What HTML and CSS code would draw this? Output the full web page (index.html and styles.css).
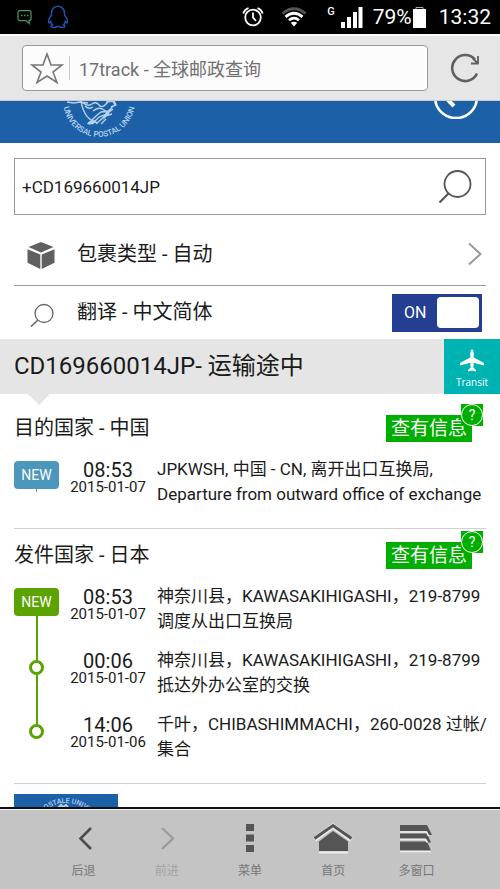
FILE: index.html
```html
<!DOCTYPE html>
<html lang="zh-CN">
<head>
<meta charset="utf-8">
<meta name="viewport" content="width=device-width, initial-scale=1">
<title>17track - 全球邮政查询</title>
<link rel="stylesheet" href="styles.css">
</head>
<body>
<div class="status">
  <svg class="status-chat" width="16" height="18" viewBox="0 0 16 18" fill="none" stroke="#4f9a5c" stroke-width="1.2"><path d="M3 2.600h9q2 0 2 2v6q0 2-2 2l.2 3-3.200-3H3q-2 0-2-2v-6q0-2 2-2z"/><path d="M4 7.500h1.500M7 7.500h1.500M10 7.500h1.500" stroke-width="1.500"/></svg>
  <svg class="status-qq" width="22" height="24" viewBox="0 0 22 24" fill="none" stroke="#2453ae" stroke-width="1.500"><path d="M4.500 10C4 4.500 7 1.200 11 1.200S18 4.500 17.500 10c2 2.500 3.500 5.500 2.800 7.500-.5.800-1.300 0-2-1-.3 1.500-.8 2.400-1.800 3.500 2.500 1.200 1.200 2.600-1 2.600-1.800 0-2.800-.5-3.500-1.200h-2c-.7.700-1.700 1.200-3.500 1.200-2.200 0-3.500-1.400-1-2.600-1-1.100-1.500-2-1.800-3.500-.7 1-1.500 1.800-2 1C1 15.500 2.500 12.500 4.500 10z"/></svg>
  <div class="status-right">
    <svg width="24" height="22" viewBox="0 0 24 22" fill="none" stroke="#fff" stroke-width="1.800"><circle cx="12" cy="11.500" r="7.800"/><path d="M12 6.500v5l3 3.500M2.300 7.500Q3.500 3.500 7.500 2M21.700 7.500Q20.500 3.500 16.500 2"/></svg>
    <svg class="status-wifi" width="26" height="20" viewBox="0 0 26 20" fill="none" stroke="#fff" stroke-width="2.800"><path d="M1.500 6.500Q13-3 24.500 6.500" stroke="#555"/><path d="M4.500 9.800Q13 2.800 21.500 9.800M8 13.200Q13 9 18 13.200"/><path d="M9.800 15.800Q13 13.500 16.200 15.800L13 19.500z" fill="#fff" stroke="none"/></svg>
    <span class="status-net">G</span>
    <svg width="22" height="22" viewBox="0 0 22 22" fill="#fff"><path d="M0 16h4v6H0zM6 11h4v11H6zM12 6h4v16h-4zM17.500 1h4v21h-4z"/></svg>
    <span class="status-percent">79%</span>
    <svg width="15" height="22" viewBox="0 0 15 22"><path d="M4 4V1.500h7V4" fill="none" stroke="#aaa"/><path d="M1 3h13v19H1z" fill="#fff"/></svg>
    <span class="status-time">13:32</span>
  </div>
</div>

<header class="browser">
  <div class="address">
    <button class="plain" type="button" aria-label="收藏"><svg width="34" height="32" viewBox="0 0 34 32" fill="none" stroke="#777" stroke-width="1.600"><path d="M17 2l4 11h11l-9 7 4 10.500-10-6.500-10 6.500 4-10.500-9-7h11z"/></svg></button>
    <input class="address-input" type="text" aria-label="网址" value="17track - 全球邮政查询">
  </div>
  <button class="plain reload" type="button" aria-label="刷新"><svg width="30" height="30" viewBox="0 0 30 30" fill="none" stroke="#606060" stroke-width="2.600"><path d="M27 20.500A13 13 0 1 1 25 6.500"/><path d="M28 3v7.500h-7M28 10.500l-5.500-5.500" stroke-width="1.800"/></svg></button>
</header>

<main class="page">
  <div class="banner">
    <svg class="banner-logo" width="80" height="42" viewBox="0 0 80 42">
      <path id="seal-bottom" d="M4 0A36 36 0 0 0 76 0" fill="none"/>
      <text class="seal-text"><textPath href="#seal-bottom" startOffset="50%" text-anchor="middle">UNIVERSAL POSTAL UNION</textPath></text>
      <g fill="none" stroke="#b5d2ec" stroke-width="1.400"><path d="M22 0Q25 19 39 22M8 1l7 1 6-1 8 1M24 2q5 4 9 1t7 1 8-2 8 2M26 5q4 4 8 1M30 22l7-7 5-4 8-1 4-5M33 23l7-7 8-3M37 23l9-8 7-2M42 23l5-5M34 10q6-5 11-1 4 4 9-1M47 1l8-1 2 4-5 2"/><path d="M35 19q-5 0-7 4 6 2 9-3zM47 11l-3 8 6-6 2-6z" fill="#b5d2ec" stroke="none"/></g>
    </svg>
    <a class="banner-back" href="#top" aria-label="返回"><svg width="44" height="18" viewBox="0 0 44 18" fill="none" stroke="#fff"><path d="M1.200-3a20.800 20 0 0 0 41.600 0" stroke-width="2.600"/><path d="M13-2l7 7" stroke-width="4"/></svg></a>
  </div>

  <form class="query">
    <div class="search">
      <input class="search-input" type="text" aria-label="运单号" value="+CD169660014JP">
      <button class="plain" type="submit" aria-label="查询"><svg width="34" height="34" viewBox="0 0 34 34" fill="none" stroke="#555" stroke-width="1.800"><circle cx="19.500" cy="14" r="13"/><path d="M10.500 23.500l-9 9" stroke-width="2.200"/></svg></button>
    </div>
    <button class="option option-type" type="button">
      <svg class="option-icon" width="28" height="28" viewBox="0 0 28 28" fill="#606060"><path d="M14 0l12.500 5L14 10.500 1.500 5zM.5 7.200l12.800 5.300V27L.5 20.800zM27.500 7.200l-12.800 5.300V27l12.800-6.200z"/></svg>
      <span class="option-label">包裹类型 - 自动</span>
      <svg width="14" height="24" viewBox="0 0 14 24" fill="none" stroke="#999" stroke-width="2"><path d="M1 1.500L12.500 12 1 22.500"/></svg>
    </button>
    <div class="option option-translate">
      <svg class="option-icon" width="28" height="24" viewBox="0 0 28 24" fill="none" stroke="#666" stroke-width="1.300"><circle cx="17" cy="10.500" r="9"/><path d="M11 17l-7 6.500" stroke-width="1.600"/></svg>
      <label class="option-label" for="translate">翻译 - 中文简体</label>
      <label class="toggle"><input class="toggle-input" id="translate" type="checkbox" checked><span>ON</span><span class="toggle-knob"></span></label>
    </div>
  </form>

  <div class="parcel">
    <h1 class="parcel-title">CD169660014JP- 运输途中</h1>
    <div class="parcel-state">
      <svg width="24" height="23" viewBox="0 0 24 23" fill="#fff"><path d="M12 0q1.700 1 1.700 4v4.500L24 14v2.500l-10.300-2.700-.3 5L16 21v1.500l-4-1-4 1V21l2.600-2.200-.3-5L0 16.500V14l10.300-5.500V4q0-3 1.700-4z"/></svg>
      <span>Transit</span>
    </div>
  </div>

  <section class="leg leg-destination">
    <div class="leg-head">
      <h2 class="leg-title">目的国家 - 中国</h2>
      <a class="info" href="#destination">查有信息<span class="info-badge"><span class="info-mark">?</span></span></a>
    </div>
    <ol class="events">
      <li class="event">
        <div class="marker"><span class="new">NEW</span><span class="stub"></span></div>
        <div class="when"><span class="time">08:53</span><span class="date">2015-01-07</span></div>
        <p class="what">JPKWSH, 中国 - CN, 离开出口互换局, Departure from outward office of exchange</p>
      </li>
    </ol>
  </section>

  <section class="leg leg-origin">
    <div class="leg-head">
      <h2 class="leg-title">发件国家 - 日本</h2>
      <a class="info" href="#origin">查有信息<span class="info-badge"><span class="info-mark">?</span></span></a>
    </div>
    <ol class="events">
      <li class="event">
        <div class="marker"><span class="new">NEW</span><span class="line"></span></div>
        <div class="when"><span class="time">08:53</span><span class="date">2015-01-07</span></div>
        <p class="what">神奈川县，KAWASAKIHIGASHI，219-8799 调度从出口互换局</p>
      </li>
      <li class="event">
        <div class="marker"><span class="lead"></span><span class="dot"></span><span class="line"></span></div>
        <div class="when"><span class="time">00:06</span><span class="date">2015-01-07</span></div>
        <p class="what">神奈川县，KAWASAKIHIGASHI，219-8799 抵达外办公室的交换</p>
      </li>
      <li class="event">
        <div class="marker"><span class="lead"></span><span class="dot"></span></div>
        <div class="when"><span class="time">14:06</span><span class="date">2015-01-06</span></div>
        <p class="what">千叶，CHIBASHIMMACHI，260-0028 过帐/集合</p>
      </li>
    </ol>
  </section>

  <div class="partner">
    <svg width="104" height="80" viewBox="0 0 104 80">
      <path id="seal-top" d="M19 42A33 33 0 0 1 85 42" fill="none"/>
      <text class="seal-text seal-small"><textPath href="#seal-top" startOffset="50%" text-anchor="middle">UNION POSTALE UNIVERSELLE</textPath></text>
      <path d="M44 14l3-3 2 2 3-2 2 2" fill="none" stroke="#b5d2ec" stroke-width="2"/>
    </svg>
  </div>
</main>

<nav class="toolbar">
  <button class="tool" type="button"><svg width="34" height="32" viewBox="0 0 34 32" fill="none" stroke="#4c4c4c" stroke-width="2.600"><path d="M24 6L13.500 16.500 24 27"/></svg><span>后退</span></button>
  <button class="tool" type="button" disabled><svg width="34" height="32" viewBox="0 0 34 32" fill="none" stroke="#9b9b9b" stroke-width="2.400"><path d="M12 6l11 10.500L12 27"/></svg><span>前进</span></button>
  <button class="tool" type="button"><svg width="34" height="32" viewBox="0 0 34 32" fill="#555"><path d="M13 2h8v7h-8zM13 12.500h8v7h-8zM13 23h8v7h-8z"/></svg><span>菜单</span></button>
  <button class="tool" type="button"><svg width="40" height="32" viewBox="0 0 40 32" fill="#555"><path d="M6 30.500h29" stroke="#eee" stroke-width="2"/><path d="M20 9L6 19.500V29h29V19.500z"/><path d="M1.500 17.500L20 4l18.500 13.500" fill="none" stroke="#eee" stroke-width="5"/><path d="M1.500 16.500L20 3.500l18.500 13" fill="none" stroke="#555" stroke-width="3"/></svg><span>首页</span></button>
  <button class="tool" type="button"><svg width="34" height="32" viewBox="0 0 34 32" fill="#555"><path d="M1 3h27l5 10h-3l-2.500-4H1z"/><path d="M1 11.500h27l4 9h-3l-2.500-4H1z"/><path d="M1 19.500h27L32 28.500H1z"/><path d="M1 10h26.500l2 4M1 17.500h25.500l2 3M1 29.500h31" fill="none" stroke="#eee" stroke-width="1.600"/></svg><span>多窗口</span></button>
</nav>
</body>
</html>
```
FILE: styles.css
```css
* { box-sizing: border-box; }

body {
  margin: 0;
  height: 100vh;
  display: flex;
  flex-direction: column;
  background: #fff;
  color: #1a1a1a;
  font-family: Roboto, "Noto Sans CJK SC", sans-serif;
  font-size: 16px;
}

svg { display: block; flex: none; }

button, input { font: inherit; color: inherit; }

.plain { padding: 0; border: 0; background: none; }

/* System status bar */
.status {
  flex: none;
  display: flex;
  align-items: center;
  height: 34px;
  padding: 0 9px 0 17px;
  background: #000;
  color: #fff;
}

.status-qq { margin-left: 14px; }

.status-right {
  display: flex;
  align-items: center;
  margin-left: auto;
  font-size: 21px;
  line-height: 24px;
}

.status-wifi { margin-left: 16px; }

.status-net {
  align-self: flex-start;
  margin: 0 6px 0 20px;
  font-size: 11px;
  font-weight: 500;
  line-height: 14px;
}

.status-percent { margin-left: 10px; }

.status-time { margin-left: 12px; }

/* Browser address bar */
.browser {
  flex: none;
  display: flex;
  align-items: center;
  height: 67px;
  padding: 0 20px 0 22px;
  border-top: 2px solid #fafafa;
  border-bottom: 1px solid #c9c9c9;
  background: #e6e6e6;
}

.address {
  flex: 1;
  display: flex;
  align-items: center;
  height: 46px;
  padding-left: 7px;
  border: 1px solid #999;
  border-radius: 4px;
  background: #fcfcfc;
}

.address-input {
  flex: 1;
  min-width: 0;
  height: 24px;
  margin-left: 5px;
  padding: 0 0 0 9px;
  border: 0;
  border-left: 1px solid #ccc;
  background: none;
  color: #707070;
  font-size: 18px;
}

.reload { margin-left: 22px; }

/* Page content */
.page { flex: 1; min-height: 0; overflow: hidden; }

.banner {
  display: flex;
  justify-content: space-between;
  height: 42px;
  padding: 0 22px 0 59px;
  overflow: hidden;
  background: #1c60a8;
}

.seal-text { fill: #b5d2ec; font-size: 8px; font-weight: 500; }

.seal-small { font-size: 7px; }

.query { padding: 15px 14px 0; }

.search {
  display: flex;
  align-items: center;
  height: 57px;
  padding: 0 13px 0 7px;
  border: 1px solid #999;
}

.search-input {
  flex: 1;
  min-width: 0;
  padding: 0;
  border: 0;
  background: none;
  font-size: 17px;
}

.option {
  display: flex;
  align-items: center;
  width: 100%;
  padding: 0 4px 0 13px;
  border: 0;
  background: none;
  font-size: 20px;
  text-align: left;
}

.option-type { height: 71px; padding-top: 8px; border-bottom: 1px solid #999; }

.option-translate { height: 53px; }

.option-icon { margin-top: 4px; }

.option-label { flex: 1; margin-left: 22px; padding-bottom: 4px; }

.toggle {
  display: flex;
  align-items: center;
  justify-content: space-between;
  width: 90px;
  height: 38px;
  padding: 0 3px 0 12px;
  background: #233e92;
  color: #fff;
  font-size: 16px;
}

.toggle-input { position: absolute; opacity: 0; pointer-events: none; }

.toggle-knob { width: 42px; height: 31px; border-radius: 4px; background: #fff; }

/* Parcel heading */
.parcel {
  position: relative;
  display: flex;
  align-items: stretch;
  height: 55px;
  background: #e5e5e5;
}

.parcel::after {
  content: "";
  position: absolute;
  top: 100%;
  left: 28px;
  border: 11px solid transparent;
  border-top-color: #e5e5e5;
  border-bottom: 0;
}

.parcel-title {
  flex: 1;
  margin: 0;
  padding-left: 14px;
  font-size: 24px;
  font-weight: 400;
  line-height: 55px;
}

.parcel-state {
  display: flex;
  flex-direction: column;
  align-items: center;
  gap: 4px;
  width: 56px;
  padding-top: 10px;
  background: #00b3b3;
  color: #fff;
  font-family: "Open Sans", sans-serif;
  font-size: 10px;
  line-height: 12px;
}

/* Tracking legs */
.leg {
  margin: 0 14px;
  padding: 13px 0 7px;
  border-bottom: 1px solid #d0d0d0;
}

.leg-destination { padding-top: 21px; }

.leg-head {
  display: flex;
  justify-content: space-between;
  margin-bottom: 15px;
  padding-right: 14px;
  line-height: 27px;
}

.leg-title { margin: 0; font-size: 20px; font-weight: 400; }

.info {
  position: relative;
  padding: 0 5px;
  background: #00ae00;
  color: #fff;
  font-size: 19px;
  text-decoration: none;
}

.info-badge {
  position: absolute;
  top: -11px;
  right: -11px;
  width: 22px;
  height: 22px;
  background: #00ae00;
}

.info-mark {
  display: block;
  height: 22px;
  border: 1px solid #fff;
  border-radius: 50%;
  background: #00ae00;
  font-size: 14px;
  line-height: 20px;
  text-align: center;
}

.events { margin: 0; padding: 0; list-style: none; }

.event {
  display: grid;
  grid-template-columns: 45px 76px 1fr;
  column-gap: 11px;
}

.marker { display: flex; flex-direction: column; align-items: center; }

.new {
  width: 100%;
  height: 28px;
  margin-top: 4px;
  border-radius: 4px;
  background: #5ba301;
  color: #fff;
  font-size: 14px;
  line-height: 28px;
  text-align: center;
}

.leg-destination .new { background: #4c97be; }

.stub { width: 1px; height: 3px; background: #4c97be; }

.line { flex: 1; width: 2px; background: #5ba301; }

.lead { width: 2px; height: 12px; background: #5ba301; }

.dot {
  width: 15px;
  height: 15px;
  border: 3px solid #5ba301;
  border-radius: 50%;
}

.when {
  display: flex;
  flex-direction: column;
  align-items: center;
  padding-top: 4px;
}

.time { font-size: 20px; line-height: 18px; }

.date { font-size: 15px; line-height: 16px; }

.what { margin: 0 -6px 0 0; padding-bottom: 14px; font-size: 17px; line-height: 25px; }

.partner { width: 104px; margin: 10px 14px 0; background: #1c60a8; }

/* Browser toolbar */
.toolbar {
  flex: none;
  display: flex;
  height: 82px;
  padding: 0 42px;
  border-top: 2px solid #111;
  background: #c4c4c4;
  box-shadow: inset 0 1px #eee;
}

.tool {
  flex: 1;
  display: flex;
  flex-direction: column;
  align-items: center;
  gap: 8px;
  padding: 13px 0 0;
  border: 0;
  background: none;
  color: #777;
  font-size: 12px;
  line-height: 18px;
}

.tool:disabled { color: #a3a3a3; }
```
